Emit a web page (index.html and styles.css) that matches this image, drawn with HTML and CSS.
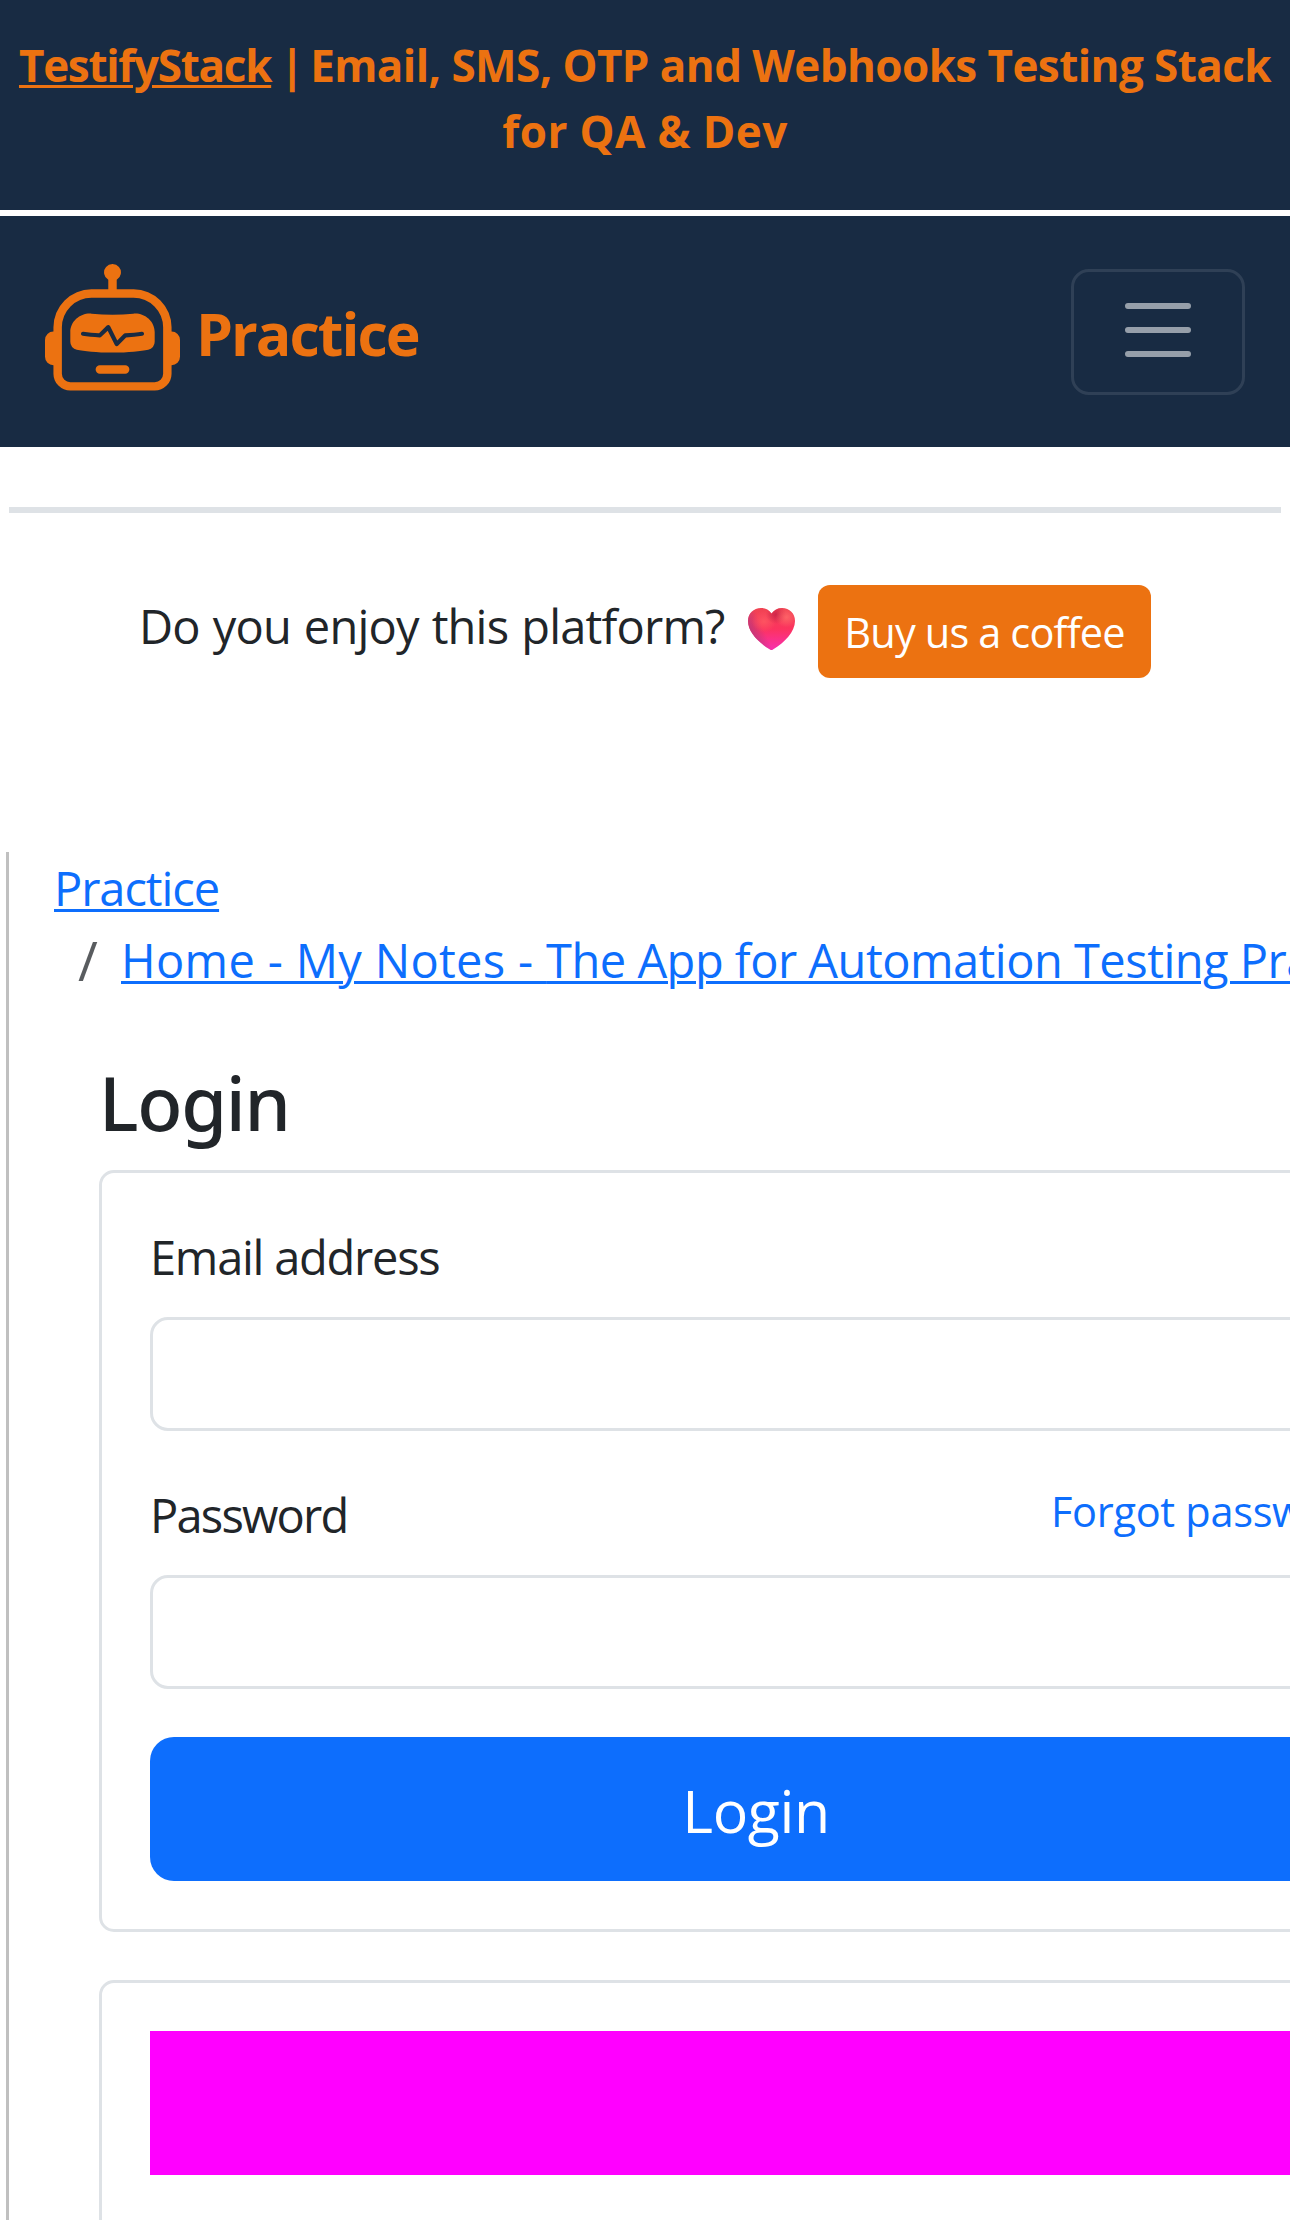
FILE: index.html
```
<!DOCTYPE html>
<html lang="en">
<head>
<meta charset="utf-8">
<title>Login - Practice</title>
<link rel="stylesheet" href="styles.css">
</head>
<body>
<div class="banner"><a class="banner-link" href="#">TestifyStack</a><span class="banner-bar"> | </span>Email, SMS, OTP and Webhooks Testing Stack<br><span class="banner-end">for QA &amp; Dev</span></div>
<nav class="navbar">
  <a class="brand" href="#">
    <svg class="robot" viewBox="0 0 16 16" fill="currentColor" aria-hidden="true">
      <path d="M6 12.5a.5.5 0 0 1 .5-.5h3a.5.5 0 0 1 0 1h-3a.5.5 0 0 1-.5-.5M3 8.062C3 6.76 4.235 5.765 5.53 5.886a26.6 26.6 0 0 0 4.94 0C11.765 5.765 13 6.76 13 8.062v1.157a.93.93 0 0 1-.765.935c-.845.147-2.34.346-4.235.346s-3.39-.2-4.235-.346A.93.93 0 0 1 3 9.219zm4.542-.827a.25.25 0 0 0-.217.068l-.92.9a25 25 0 0 1-1.871-.183.25.25 0 0 0-.068.495c.55.076 1.232.149 2.02.193a.25.25 0 0 0 .189-.071l.754-.736.847 1.71a.25.25 0 0 0 .404.062l.932-.97a25 25 0 0 0 1.922-.188.25.25 0 0 0-.068-.495c-.538.074-1.207.145-1.98.189a.25.25 0 0 0-.166.076l-.754.785-.842-1.7a.25.25 0 0 0-.182-.135"/>
      <path d="M8.5 1.866a1 1 0 1 0-1 0V3h-2A4.5 4.5 0 0 0 1 7.5V8a1 1 0 0 0-1 1v2a1 1 0 0 0 1 1v1a2 2 0 0 0 2 2h10a2 2 0 0 0 2-2v-1a1 1 0 0 0 1-1V9a1 1 0 0 0-1-1v-.5A4.5 4.5 0 0 0 10.5 3h-2zM14 7.5V13a1 1 0 0 1-1 1H3a1 1 0 0 1-1-1V7.5A3.5 3.5 0 0 1 5.5 4h5A3.5 3.5 0 0 1 14 7.5"/>
    </svg>
    <span class="brand-name">Practice</span>
  </a>
  <button class="toggler" type="button" aria-label="Toggle navigation">
    <svg class="bars" viewBox="0 0 30 30" aria-hidden="true"><path stroke="rgba(255,255,255,.55)" stroke-linecap="round" stroke-miterlimit="10" stroke-width="2" d="M5 7h20M5 15h20M5 23h20"/></svg>
  </button>
</nav>
<hr class="rule">
<section class="support">
  <span class="support-text">Do you enjoy this platform?</span>
  <svg class="heart" viewBox="0 0 47 42" aria-hidden="true">
    <defs>
      <linearGradient id="base" x1="0" y1="0" x2="0" y2="1"><stop offset="0" stop-color="#f04452"/><stop offset=".5" stop-color="#fc335f"/><stop offset="1" stop-color="#f82fb0"/></linearGradient>
      <radialGradient id="left" cx=".34" cy=".32" r=".26"><stop offset="0" stop-color="#ff5a62" stop-opacity=".8"/><stop offset="1" stop-color="#ff5a62" stop-opacity="0"/></radialGradient>
      <radialGradient id="right" cx=".82" cy=".22" r=".24"><stop offset="0" stop-color="#ff6c6a" stop-opacity=".8"/><stop offset="1" stop-color="#ff6c6a" stop-opacity="0"/></radialGradient>
      <radialGradient id="fold" cx=".6" cy=".16" r=".22"><stop offset="0" stop-color="#c51f45" stop-opacity=".8"/><stop offset="1" stop-color="#c51f45" stop-opacity="0"/></radialGradient>
      <linearGradient id="edge" x1="0" y1=".4" x2=".25" y2=".3"><stop offset="0" stop-color="#b8387c" stop-opacity=".8"/><stop offset="1" stop-color="#b8387c" stop-opacity="0"/></linearGradient>
      <path id="shape" d="M23.500 5.500C21 2 17.500 0 13 0 5.500 0 0 5.500 0 13c0 11 10.500 21.500 22 28.500q1.500 1 3 0C36.500 34.500 47 24 47 13 47 5.500 41.500 0 34 0c-4.500 0-8 2-10.500 5.500z"/>
    </defs>
    <use href="#shape" fill="url(#base)"/><use href="#shape" fill="url(#edge)"/><use href="#shape" fill="url(#left)"/><use href="#shape" fill="url(#fold)"/><use href="#shape" fill="url(#right)"/>
  </svg>
  <a class="coffee" href="#">Buy us a coffee</a>
</section>
<main class="frame">
  <ol class="breadcrumb">
    <li><a class="crumb-root" href="#">Practice</a></li>
    <li class="crumb-sub"><span class="slash">/</span><a class="crumb-home" href="#"><span class="crumb-app">Home - My Notes - </span>The App for Automation Testing Practice</a></li>
  </ol>
  <div class="content">
    <h1 class="title">Login</h1>
    <form class="card">
      <div class="field">
        <label class="label label-email" for="email">Email address</label>
        <input class="input" id="email" type="email">
      </div>
      <div class="field">
        <div class="label-row"><label class="label label-password" for="password">Password</label><a class="forgot" href="#">Forgot password</a></div>
        <input class="input" id="password" type="password">
      </div>
      <button class="submit" type="button">Login</button>
    </form>
    <div class="card card-tall">
      <div class="block"></div>
    </div>
  </div>
</main>
</body>
</html>
```
FILE: styles.css
```
* { box-sizing: border-box; }
html { height: 2220px; overflow: hidden; }
body {
  margin: 0;
  height: 2220px;
  overflow: hidden;
  display: flex;
  flex-direction: column;
  background: #fff;
  color: #212529;
  font: 47px/72px "Open Sans", "Noto Sans", sans-serif;
}
a { color: #0d6efd; }

.banner {
  flex: none;
  height: 210px;
  margin-bottom: 6px;
  padding-top: 32px;
  background: #182b43;
  color: #ec7211;
  font-size: 44px;
  font-weight: 700;
  line-height: 66px;
  letter-spacing: -0.57px;
  text-align: center;
  white-space: nowrap;
}
.banner-link {
  color: inherit;
  letter-spacing: -1.3px;
  text-decoration-thickness: 3px;
  text-underline-offset: 3px;
}
.banner-bar { letter-spacing: -2.7px; }
.banner-end { letter-spacing: 0.4px; }

.navbar {
  flex: none;
  height: 231px;
  padding: 0 45px;
  display: flex;
  align-items: center;
  justify-content: space-between;
  background: #182b43;
}
.brand {
  display: flex;
  align-items: center;
  gap: 16px;
  color: #ec7211;
  text-decoration: none;
}
.robot { width: 135px; height: 135px; }
.brand-name {
  padding-top: 3px;
  font-size: 59px;
  font-weight: 700;
  line-height: 90px;
  letter-spacing: -2px;
}
.toggler {
  width: 174px;
  height: 126px;
  padding: 0;
  display: flex;
  align-items: center;
  justify-content: center;
  border: 3px solid rgba(255, 255, 255, 0.1);
  border-radius: 18px;
  background: none;
}
.bars { width: 90px; height: 90px; margin-bottom: 4px; }

.rule {
  flex: none;
  width: 1272px;
  height: 6px;
  margin: 60px 9px 72px;
  border: 0;
  background: #dee2e6;
}

.support {
  flex: none;
  height: 93px;
  margin-bottom: 174px;
  padding-left: 139px;
  display: flex;
  align-items: flex-start;
  white-space: nowrap;
}
.support-text {
  width: 609px;
  padding-top: 5px;
  letter-spacing: -0.8px;
  word-spacing: 1.5px;
}
.heart { width: 47px; height: 42px; margin: 23px 23px 0 0; }
.coffee {
  width: 333px;
  height: 93px;
  padding-top: 16px;
  border-radius: 12px;
  background: #ec7211;
  color: #fff;
  font-size: 41.5px;
  line-height: 63px;
  letter-spacing: -0.85px;
  text-align: center;
  text-decoration: none;
}

.frame {
  flex: 1;
  margin-left: 6px;
  padding-left: 45px;
  border-left: 3px solid #c0c0c0;
  overflow: hidden;
  white-space: nowrap;
}
.breadcrumb { margin: 0; padding: 0; list-style: none; }
.breadcrumb li { height: 72px; }
.breadcrumb a { text-decoration-thickness: 3px; text-underline-offset: 3px; }
.crumb-root { letter-spacing: -1.07px; }
.crumb-home { letter-spacing: -0.5px; }
.crumb-app { letter-spacing: 0.33px; }
.crumb-sub { padding-left: 24px; display: flex; align-items: flex-start; }
.slash {
  flex: none;
  width: 43px;
  color: rgba(33, 37, 41, 0.75);
  font-size: 54px;
}

.content { width: 1314px; margin: 62px 0 0 45px; }
.title {
  margin: 0 0 22px;
  font: 500 74px/90px "Noto Sans", "Open Sans", sans-serif;
  letter-spacing: -1.3px;
}
.card {
  margin-bottom: 48px;
  padding: 48px;
  border: 3px solid #dee2e6;
  border-radius: 15px;
}
.card-tall { height: 420px; }
.field { margin-bottom: 48px; }
.label { display: block; height: 72px; }
.label-email { letter-spacing: -1.25px; }
.label-password { letter-spacing: -1.8px; }
.label-row { display: flex; justify-content: space-between; }
.forgot {
  width: 311px;
  padding-top: 1px;
  font-size: 41.5px;
  line-height: 63px;
  letter-spacing: -0.3px;
  text-decoration: none;
}
.input {
  display: block;
  width: 100%;
  height: 114px;
  margin-top: 24px;
  border: 3px solid #dee2e6;
  border-radius: 18px;
  background: #fff;
}
.submit {
  display: block;
  width: 100%;
  height: 144px;
  padding: 1px 0 0;
  border: 0;
  border-radius: 24px;
  background: #0d6efd;
  color: #fff;
  font: 59px/90px "Open Sans", "Noto Sans", sans-serif;
  letter-spacing: -0.4px;
}
.block { height: 144px; background: #f0f; }
```
